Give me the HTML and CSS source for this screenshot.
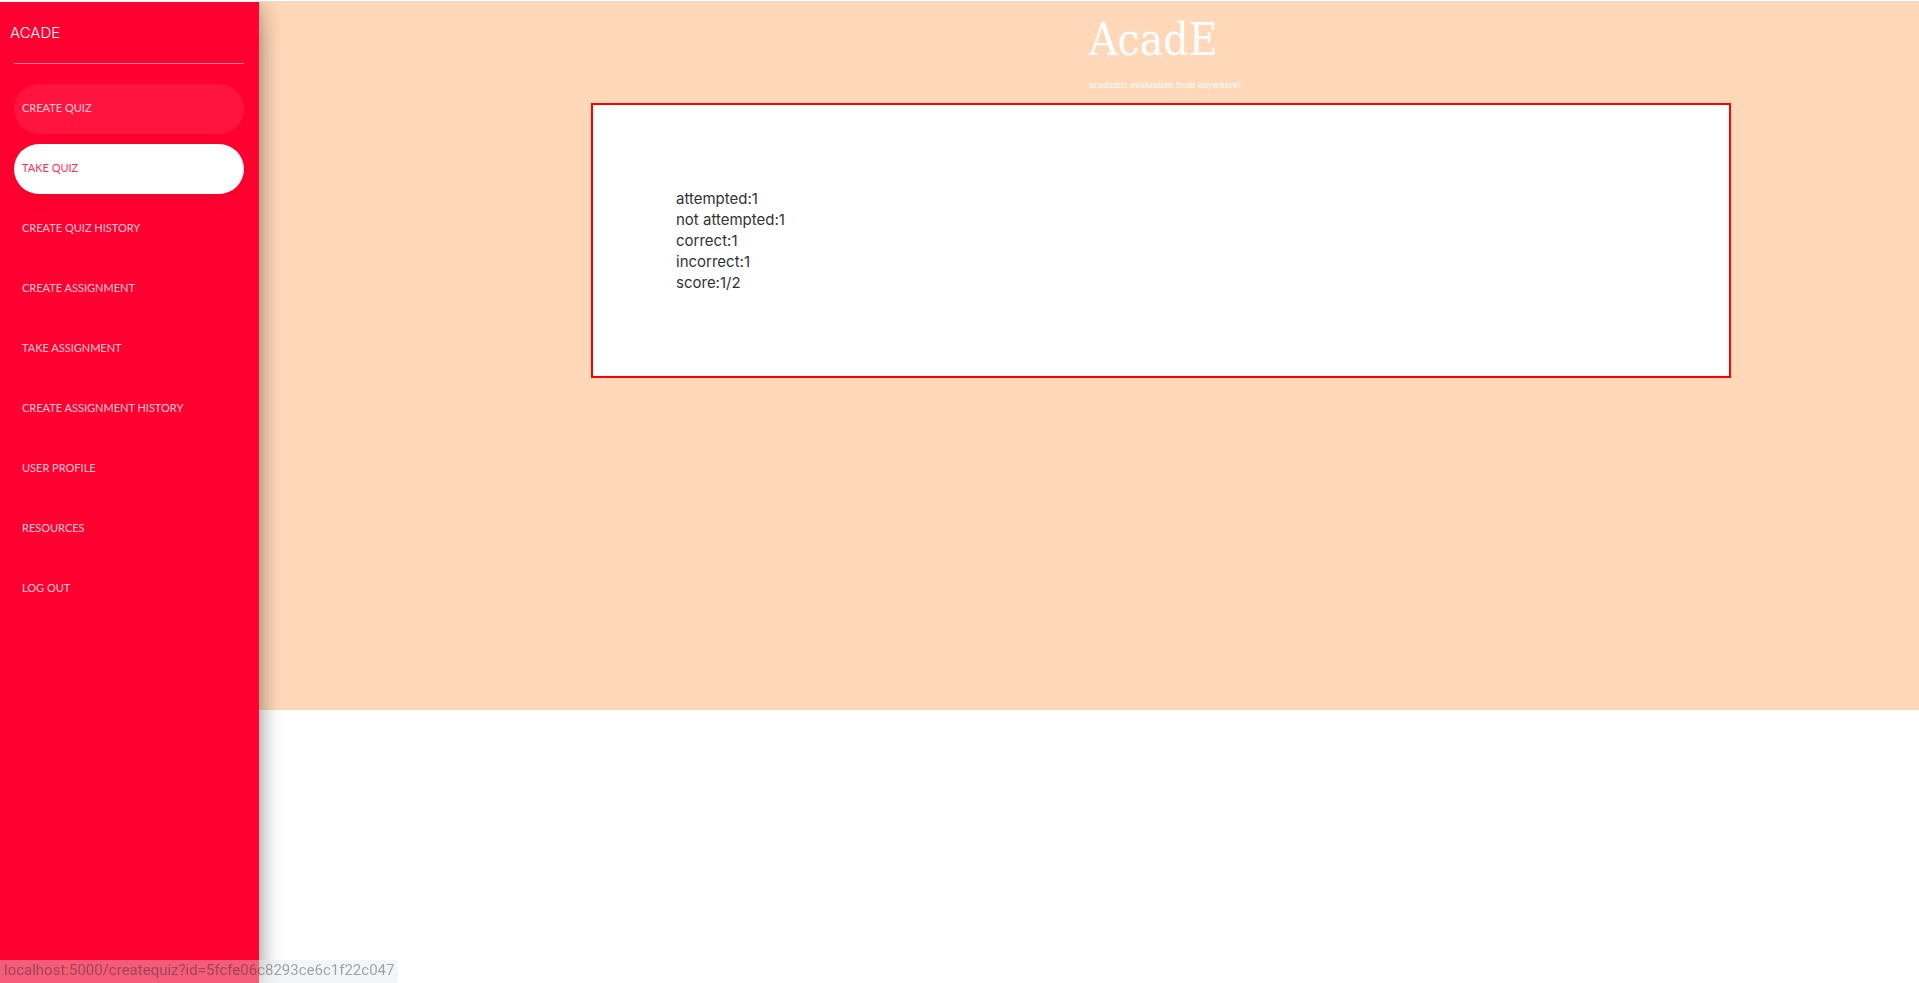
FILE: index.html
```html
<!DOCTYPE html>
<html lang="en">
<head>
<meta charset="utf-8">
<title>AcadE</title>
<meta name="viewport" content="width=device-width, initial-scale=1">
<link rel="stylesheet" href="styles.css">
</head>
<body>
<div class="wrapper">
  <aside class="sidebar">
    <a class="logo" href="#">ACADE</a>
    <nav class="menu">
      <a class="menu-link hovered" href="#">CREATE QUIZ</a>
      <a class="menu-link active" href="#">TAKE QUIZ</a>
      <a class="menu-link" href="#">CREATE QUIZ HISTORY</a>
      <a class="menu-link" href="#">CREATE ASSIGNMENT</a>
      <a class="menu-link" href="#">TAKE ASSIGNMENT</a>
      <a class="menu-link" href="#">CREATE ASSIGNMENT HISTORY</a>
      <a class="menu-link" href="#">USER PROFILE</a>
      <a class="menu-link" href="#">RESOURCES</a>
      <a class="menu-link" href="#">LOG OUT</a>
    </nav>
  </aside>
  <main class="main">
    <div class="panel">
      <header class="header">
        <h1 class="title">AcadE</h1>
        <p class="tagline">acadamic evaluation from anywhere!</p>
      </header>
      <section class="result">
        <div>attempted:1</div>
        <div>not attempted:1</div>
        <div>correct:1</div>
        <div>incorrect:1</div>
        <div>score:1/2</div>
      </section>
    </div>
  </main>
</div>
<div class="status">localhost:5000/createquiz?id=5fcfe06c8293ce6c1f22c047</div>
</body>
</html>
```
FILE: styles.css
```css
* {
  box-sizing: border-box;
}

body {
  margin: 0;
  background: #fff;
  color: #333;
  font-family: Inter, "Liberation Sans", sans-serif;
  font-size: 15px;
  line-height: 21px;
}

.wrapper {
  display: flex;
  min-height: 100vh;
  padding-top: 1px;
}

.sidebar {
  position: relative;
  z-index: 1;
  flex: 0 0 259px;
  margin-top: 1px;
  padding: 0 15px 0 14px;
  background: #ff0030;
  box-shadow: 0 10px 30px -12px rgba(0, 0, 0, 0.42), 0 4px 25px 0 rgba(0, 0, 0, 0.12), 0 8px 10px -5px rgba(0, 0, 0, 0.2), 0 0 20px 0 rgba(0, 0, 0, 0.2);
  clip-path: inset(0 -60px 0 0);
}

.logo {
  display: block;
  margin-left: -4px;
  padding: 20px 0;
  color: #fff;
  font-size: 15px;
  font-weight: 300;
  text-decoration: none;
}

.menu {
  display: flex;
  flex-direction: column;
  gap: 10px;
  padding-top: 20px;
  border-top: 1px solid rgba(255, 255, 255, 0.5);
}

.menu-link {
  padding: 14px 8px 16px;
  border-radius: 30px;
  color: rgba(255, 255, 255, 0.8);
  font-size: 11px;
  font-family: Lato, Inter, sans-serif;
  line-height: 20px;
  text-decoration: none;
}

.menu-link.hovered {
  background: rgba(255, 255, 255, 0.08);
}

.menu-link.active {
  background: #fff;
  color: #ff3058;
  box-shadow: 0 4px 20px 0 rgba(0, 0, 0, 0.05);
}

.main {
  flex: 1;
  min-width: 0;
  border-top: 1px solid #ddd;
}

.panel {
  min-height: 708px;
  padding-top: 8px;
  background: #ffd7b9;
}

.header {
  margin-left: 50%;
  color: #fff;
  font-family: "DejaVu Serif Condensed", "Liberation Serif", serif;
}

.title {
  margin: 0;
  font-size: 44px;
  font-weight: 400;
  line-height: 60px;
}

.tagline {
  margin: 0;
  padding: 5px 0 8px;
  font-size: 9px;
  line-height: 20px;
}

.result {
  max-width: 1140px;
  margin-left: 20%;
  padding: 5%;
  border: 2px solid #f00;
  background: #fff;
}

.status {
  position: fixed;
  z-index: 2;
  bottom: 0;
  left: 0;
  padding: 0 4px 2px;
  border-radius: 0 4px 0 0;
  background: rgba(228, 230, 234, 0.4);
  color: rgba(30, 34, 37, 0.4);
  font-family: Roboto, "Noto Sans", sans-serif;
  font-size: 15px;
}
```
